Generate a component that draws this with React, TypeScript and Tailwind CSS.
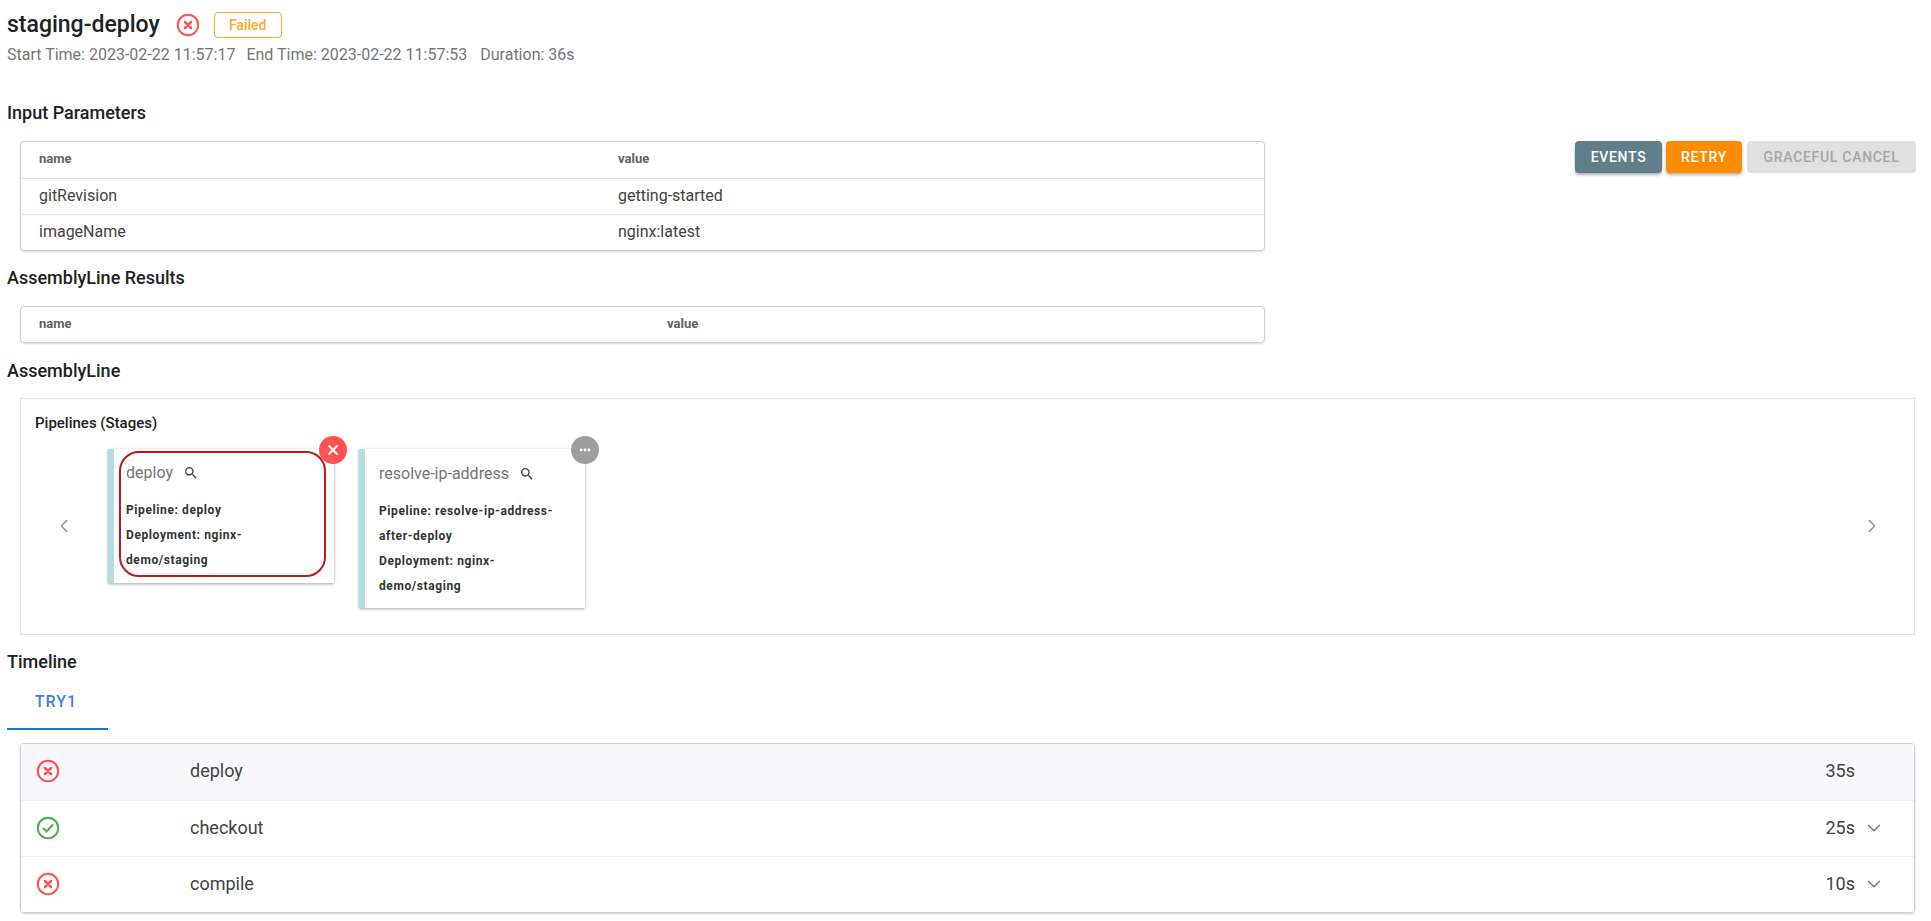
import React from 'react';
import { ChevronDown, ChevronLeft, ChevronRight, X } from 'lucide-react';

const FailIcon: React.FC<{ size?: number }> = ({ size = 24 }) => (
  <svg width={size} height={size} viewBox="0 0 24 24" fill="none" stroke="#ff5252" strokeWidth="2" strokeLinecap="round">
    <circle cx="12" cy="12" r="10.2" />
    <path strokeWidth="2.5" d="M9 9l6 6M15 9l-6 6" />
  </svg>
);

const PassIcon: React.FC = () => (
  <svg width="24" height="24" viewBox="0 0 24 24" fill="none" stroke="#4caf50" strokeWidth="2" strokeLinecap="round">
    <circle cx="12" cy="12" r="10.2" />
    <path d="M7.5 12.5l3 3 6-6.5" />
  </svg>
);

const SearchIcon: React.FC = () => (
  <svg width="16" height="16" viewBox="0 0 24 24" fill="#424242">
    <path d="M15.5 14h-.79l-.28-.27A6.471 6.471 0 0 0 16 9.5 6.5 6.5 0 1 0 9.5 16c1.61 0 3.09-.59 4.23-1.57l.27.28v.79l5 4.99L20.49 19l-4.99-5zm-6 0C7.01 14 5 11.99 5 9.5S7.01 5 9.5 5 14 7.01 14 9.5 11.99 14 9.5 14z" />
  </svg>
);

const Heading: React.FC<{ children: React.ReactNode; className?: string }> = ({ children, className }) => (
  <h2 className={`text-lg font-medium leading-6 text-[#212121] ${className ?? ''}`}>{children}</h2>
);

const params = [
  { name: 'gitRevision', value: 'getting-started' },
  { name: 'imageName', value: 'nginx:latest' },
];

const steps = [
  { name: 'deploy', time: '35s', ok: false, expand: false, active: true },
  { name: 'checkout', time: '25s', ok: true, expand: true, active: false },
  { name: 'compile', time: '10s', ok: false, expand: true, active: false },
];

const StageCard: React.FC<{ name: string; badge: 'fail' | 'pending'; outlined?: boolean; lines: string[] }> = ({ name, badge, outlined, lines }) => (
  <div className={`relative w-[226px] border-l-[6px] border-[#b2dfdb] bg-white shadow-[0_1px_3px_rgba(0,0,0,0.35)] ${outlined ? 'h-[134px]' : 'h-[159px]'}`}>
    {badge === 'fail' ? (
      <div className="absolute -top-[13px] -right-[13px] flex h-7 w-7 items-center justify-center rounded-full bg-[#ff5252]">
        <X size={16} strokeWidth={3} className="text-white" />
      </div>
    ) : (
      <div className="absolute -top-[13px] -right-[14px] flex h-7 w-7 items-center justify-center rounded-full bg-[#9e9e9e] text-white">
        <svg width="14" height="14" viewBox="0 0 14 14" fill="currentColor">
          <circle cx="3" cy="7" r="1.4" />
          <circle cx="7" cy="7" r="1.4" />
          <circle cx="11" cy="7" r="1.4" />
        </svg>
      </div>
    )}
    <div className={`${outlined ? 'mt-[2px] ml-[5px] h-[126px] w-[207px] rounded-[20px] border-2 border-[#b71c1c] pl-[5px] pt-[5px]' : 'pl-[14px] pt-[10px]'}`}>
      <div className="flex h-[30px] items-center gap-[10px] text-base text-[#757575]">
        <span>{name}</span>
        <SearchIcon />
      </div>
      <div className="mt-[10px] whitespace-nowrap text-xs font-bold leading-[25px] tracking-[0.6px] text-[#333]">
        {lines.map((line) => (
          <div key={line}>{line}</div>
        ))}
      </div>
    </div>
  </div>
);

const App: React.FC = () => {
  return (
    <div className="h-[921px] overflow-hidden bg-white pl-[7px] pr-[15px] pt-[11px] font-['Roboto',sans-serif]">
      {/* Header */}
      <div className="flex items-center">
        <h1 className="text-[23px] font-medium leading-7 text-[#212121]">staging-deploy</h1>
        <div className="ml-4"><FailIcon /></div>
        <span className="ml-[14px] flex h-[26px] w-[68px] items-center justify-center rounded border border-[#ffa726] text-sm font-medium text-[#ffa726]">Failed</span>
      </div>
      <div className="mt-[6px] flex gap-[11px] text-base leading-5 text-[#757575]">
        <span>Start Time: 2023-02-22 11:57:17</span>
        <span>End Time: 2023-02-22 11:57:53</span>
        <span className="ml-[2px]">Duration: 36s</span>
      </div>

      <Heading className="mt-[36px]">Input Parameters</Heading>

      {/* Input parameters + actions */}
      <div className="mt-[16px] flex items-start justify-between pl-[13px]">
        <div className="w-[1245px] rounded border border-[#cfcfcf] text-base text-[#424242] shadow-[0_1px_2px_rgba(0,0,0,0.15)]">
          <div className="flex h-9 items-center pb-[2px] text-[13px] font-bold text-[#616161]">
            <span className="w-[597px] pl-[18px]">name</span>
            <span>value</span>
          </div>
          {params.map((p) => (
            <div key={p.name} className="flex h-9 items-center border-t border-[#e0e0e0] pb-[2px]">
              <span className="w-[597px] pl-[18px]">{p.name}</span>
              <span>{p.value}</span>
            </div>
          ))}
        </div>
        <div className="flex text-sm font-medium tracking-[0.7px]">
          <button className="h-8 w-[87px] rounded bg-[#607d8b] text-white shadow-[0_2px_3px_rgba(0,0,0,0.3)]">EVENTS</button>
          <button className="ml-1 h-8 w-[76px] rounded bg-[#fb8c00] text-white shadow-[0_2px_3px_rgba(0,0,0,0.3)]">RETRY</button>
          <button className="ml-[5px] h-8 w-[169px] rounded bg-[#e0e0e0] text-[#a6a6a6]">GRACEFUL CANCEL</button>
        </div>
      </div>

      <Heading className="mt-[15px]">AssemblyLine Results</Heading>
      <div className="mt-[16px] ml-[13px] flex h-[37px] w-[1245px] items-center rounded border border-[#cfcfcf] pb-[2px] text-[13px] font-bold text-[#616161] shadow-[0_1px_2px_rgba(0,0,0,0.15)]">
        <span className="w-[646px] pl-[18px]">name</span>
        <span>value</span>
      </div>

      <Heading className="mt-[16px]">AssemblyLine</Heading>

      {/* Pipelines */}
      <div className="mt-[15px] ml-[13px] h-[237px] w-[1895px] border border-[#e0e0e0] px-[14px] pt-[14px]">
        <div className="text-[15px] font-medium leading-5 text-[#212121]">Pipelines (Stages)</div>
        <div className="mt-[16px] flex items-start">
          <div className="flex h-[153px] w-[73px] items-center pl-[18px]">
            <ChevronLeft size={22} strokeWidth={1.5} className="text-[#8a8a8a]" />
          </div>
          <div className="flex flex-1 items-start gap-[25px]">
            <StageCard name="deploy" badge="fail" outlined lines={['Pipeline: deploy', 'Deployment: nginx-', 'demo/staging']} />
            <StageCard name="resolve-ip-address" badge="pending" lines={['Pipeline: resolve-ip-address-', 'after-deploy', 'Deployment: nginx-', 'demo/staging']} />
          </div>
          <div className="flex h-[153px] items-center pr-[17px]">
            <ChevronRight size={22} strokeWidth={1.5} className="text-[#8a8a8a]" />
          </div>
        </div>
      </div>

      <Heading className="mt-[15px]">Timeline</Heading>

      {/* Tabs */}
      <div className="mt-[11px] flex h-[45px] w-[101px] items-center justify-center border-b-2 border-[#1976d2] text-base font-medium tracking-[1px] text-[#3f80d8]">
        <span className="-ml-[3px] -mt-[9px]">TRY1</span>
      </div>

      {/* Timeline rows */}
      <div className="mt-[13px] ml-[13px] w-[1895px] overflow-hidden rounded border border-[#d0d0d0] text-lg text-[#424242] shadow-[0_1px_2px_rgba(0,0,0,0.2)]">
        {steps.map((s, i) => (
          <div key={s.name} className={`flex h-[56px] items-center pb-[2px] pl-[15px] ${i > 0 ? 'border-t border-[#eeeeee]' : ''} ${s.active ? 'bg-[#f9f9fd]' : 'bg-white'}`}>
            <div className="w-[154px]">{s.ok ? <PassIcon /> : <FailIcon />}</div>
            <span className="flex-1">{s.name}</span>
            <span className="w-[30px] text-right">{s.time}</span>
            <div className="ml-[7px] mr-[28px] flex w-6 justify-center">
              {s.expand && <ChevronDown size={22} strokeWidth={1.5} className="text-[#757575]" />}
            </div>
          </div>
        ))}
      </div>
    </div>
  );
};

export default App;
